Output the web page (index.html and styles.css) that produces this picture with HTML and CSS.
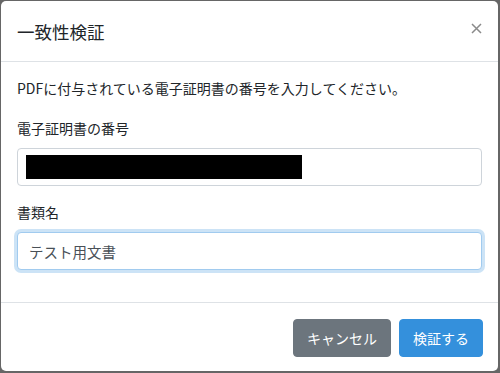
FILE: index.html
```html
<!DOCTYPE html>
<html lang="ja">
<head>
    <meta charset="UTF-8">
    <meta name="viewport" content="width=device-width, initial-scale=1.0">
    <title>一致性検証</title>
    <link rel="stylesheet" href="styles.css">
</head>
<body>
  <div class="modal">
    <div class="modal-header">
      <h5 class="modal-title">一致性検証</h5>
      <button class="close" type="button" aria-label="Close">
        <svg width="11" height="11" viewBox="0 0 11 11">
          <path d="M1 1 L10 10 M10 1 L1 10" stroke="#8a8a8a" stroke-width="1.5" fill="none"/>
        </svg>
      </button>
    </div>

    <div class="modal-body">
      <p class="lead-text">PDFに付与されている電子証明書の番号を入力してください。</p>

      <div class="form-group">
        <label class="field-label">電子証明書の番号</label>
        <div class="form-control">
          <span class="redacted"></span>
        </div>
      </div>

      <div class="form-group">
        <label class="field-label" for="docname">書類名</label>
        <input type="text" id="docname" class="form-control focused" value="テスト用文書">
      </div>
    </div>

    <div class="modal-footer">
      <button class="btn btn-secondary" type="button">キャンセル</button>
      <button class="btn btn-primary" type="button">検証する</button>
    </div>
  </div>
</body>
</html>
```

FILE: styles.css
```css
* {
  box-sizing: border-box;
}

body {
  margin: 0;
  height: 373px;
  padding: 1px 2px 2px 1px;
  background: #666666;
  font-family: "Noto Sans CJK JP", "Noto Sans", sans-serif;
  font-size: 14px;
  color: #212529;
}

.modal {
  height: 100%;
  background: white;
  border-radius: 5px;
  display: flex;
  flex-direction: column;
}

.modal-header {
  display: flex;
  justify-content: space-between;
  padding: 17px 16px 15px 16px;
  border-bottom: 1px solid #dee2e6;
}

.modal-title {
  margin: 0;
  font-size: 17.5px;
  font-weight: normal;
  line-height: 28px;
}

.close {
  align-self: flex-start;
  margin-top: 5px;
  padding: 0;
  border: none;
  background: none;
  line-height: 0;
}

.modal-body {
  padding: 16px 16px 16px 16px;
}

.lead-text {
  margin: 0 0 19px 0;
  line-height: 21px;
}

.form-group {
  margin-bottom: 16px;
}

.form-group + .form-group {
  margin-top: 2px;
}

.field-label {
  display: block;
  line-height: 21px;
  margin-bottom: 9px;
}

.form-control {
  display: block;
  width: 100%;
  height: 38px;
  padding: 6px 8px;
  border: 1px solid #ced4da;
  border-radius: 4px;
  background: white;
  font-family: inherit;
  font-size: 14.5px;
  color: #495057;
  outline: none;
}

.redacted {
  display: block;
  width: 276px;
  height: 24px;
  background: black;
}

.focused {
  padding: 6px 11px;
  border-color: #a1cbef;
  box-shadow: 0 0 0 3px rgba(52, 144, 220, 0.25);
}

.modal-footer {
  display: flex;
  justify-content: flex-end;
  gap: 8px;
  padding: 16px 15px 0 16px;
  border-top: 1px solid #dee2e6;
}

.btn {
  font-family: inherit;
  font-size: 14px;
  line-height: 22px;
  padding: 7px 13px;
  border: 1px solid transparent;
  border-radius: 4px;
  color: white;
}

.btn-secondary {
  background: #6c757d;
  border-color: #6c757d;
}

.btn-primary {
  background: #3490dc;
  border-color: #3490dc;
}
```
